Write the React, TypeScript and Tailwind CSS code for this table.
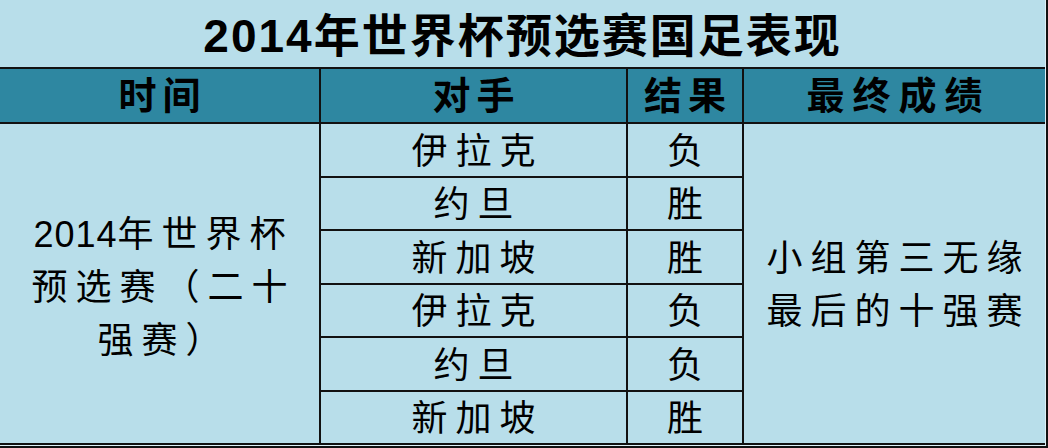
const rows = [
  { team: "伊拉克", result: "负" },
  { team: "约旦", result: "胜" },
  { team: "新加坡", result: "胜" },
  { team: "伊拉克", result: "负" },
  { team: "约旦", result: "负" },
  { team: "新加坡", result: "胜" },
];

const App = () => {
  return (
    <div className="w-[1048px] h-[448px] bg-[#111] font-['Liberation_Sans','Noto_Sans_CJK_SC',sans-serif] text-black">
      <div className="w-[1046px] h-[446px] bg-[#b8deea] border-r border-b border-[#dcf0f6] flex flex-col">
        {/* 标题 */}
        <div className="h-[67px] flex items-center justify-center pt-1 text-[46px] font-bold leading-none tracking-[2px]">
          2014年世界杯预选赛国足表现
        </div>

        {/* 表头 */}
        <div className="h-[57px] bg-[#2e87a1] border-y-2 border-[#111] grid grid-cols-[321px_307px_116px_1fr] text-[38px] font-bold leading-none">
          <div className="border-r-2 border-[#111] flex items-center justify-center tracking-[6px] pl-[6px]">时间</div>
          <div className="border-r-2 border-[#111] flex items-center justify-center tracking-[6px] pl-[6px]">对手</div>
          <div className="border-r-2 border-[#111] flex items-center justify-center tracking-[6px] pl-[6px]">结果</div>
          <div className="flex items-center justify-center tracking-[8px] pl-[8px]">最终成绩</div>
        </div>

        {/* 内容 */}
        <div className="h-[321px] grid grid-cols-[321px_307px_116px_1fr] grid-rows-6 text-[36px] leading-none">
          <div
            className="border-r-2 border-b-2 border-[#111] flex flex-col items-center justify-center gap-[17px] pt-2 tracking-[8px]"
            style={{ gridColumn: 1, gridRow: "1 / span 6" }}
          >
            <div className="pl-[8px]">
              <span className="tracking-[1px]">2014</span>年世界杯
            </div>
            <div className="pl-[8px]">预选赛（二十</div>
            <div className="pl-[8px]">强赛）</div>
          </div>

          {rows.map((r, i) => (
            <div key={`t-${i}`} className="contents">
              <div
                className="border-r-2 border-b-2 border-[#111] flex items-center justify-center tracking-[8px] pl-[8px] pt-1"
                style={{ gridColumn: 2, gridRow: i + 1 }}
              >
                {r.team}
              </div>
              <div
                className="border-r-2 border-b-2 border-[#111] flex items-center justify-center pt-1"
                style={{ gridColumn: 3, gridRow: i + 1 }}
              >
                {r.result}
              </div>
            </div>
          ))}

          <div
            className="border-b-2 border-[#111] flex flex-col items-center justify-center gap-[17px] pt-1 tracking-[8px]"
            style={{ gridColumn: 4, gridRow: "1 / span 6" }}
          >
            <div className="pl-[8px]">小组第三无缘</div>
            <div className="pl-[8px]">最后的十强赛</div>
          </div>
        </div>
      </div>
    </div>
  );
};

export default App;
